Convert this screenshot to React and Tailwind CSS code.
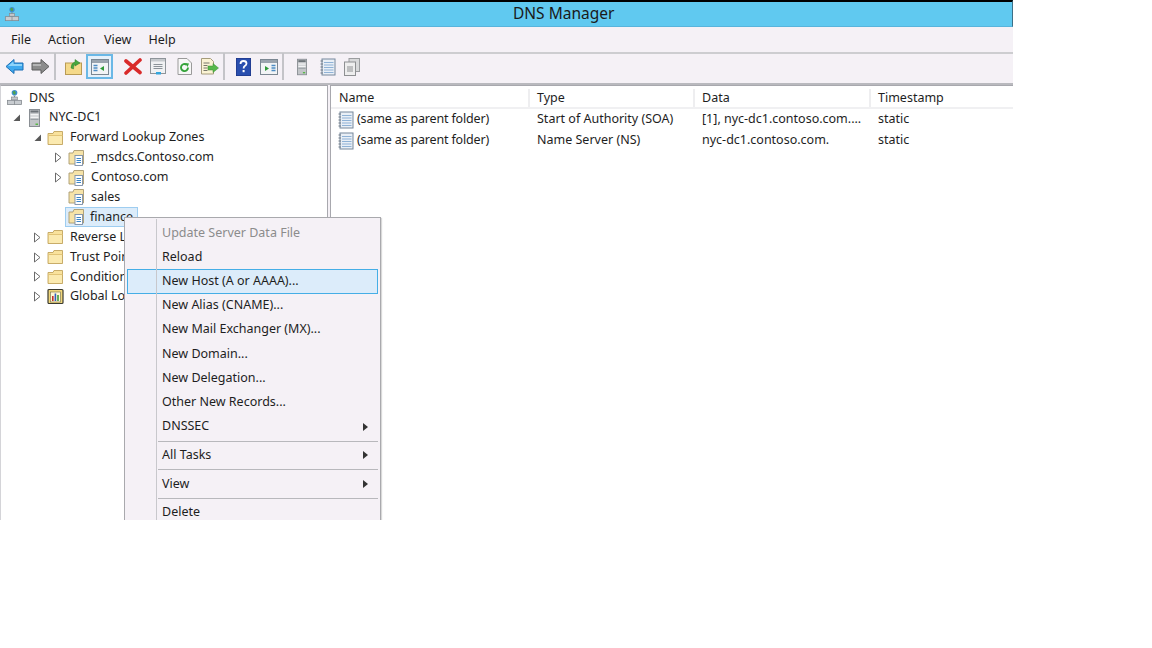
import React from "react";

const FONT = "font-['Noto_Sans','Open_Sans',sans-serif]";

// ---- Tree / list icons ----
const DnsIcon = ({ size = 18 }) => (
  <svg width={size} height={size} viewBox="0 0 18 18">
    <circle cx="9" cy="4" r="3" fill="#3f8fd0" />
    <path d="M7 3 Q9 1 10 3 Q11 5 9 6 Q7 5 7 3Z" fill="#4fa34a" />
    <rect x="8.4" y="7" width="1.2" height="3" fill="#808890" />
    <rect x="6" y="8.5" width="6" height="3" fill="#c4c8cc" stroke="#80868c" strokeWidth="0.7" />
    <rect x="1.5" y="12" width="15" height="4.5" fill="#c8ccd0" stroke="#80868c" strokeWidth="0.8" />
    <path d="M9 12v4.5" stroke="#80868c" strokeWidth="0.8" />
  </svg>
);

const ServerIcon = ({ width = 11, height = 18 }) => (
  <svg width={width} height={height} viewBox="0 0 11 18">
    <rect x="0.5" y="0.5" width="10" height="17" fill="#c2c5c8" stroke="#8a8f94" />
    <rect x="1.5" y="1.5" width="8" height="2" fill="#6d7378" />
    <rect x="1.5" y="5" width="8" height="1.5" fill="#f2f3f4" />
    <rect x="1.5" y="7.5" width="8" height="1.5" fill="#f2f3f4" />
    <rect x="1.5" y="10" width="8" height="1" fill="#9aa0a5" />
    <rect x="6.5" y="14.5" width="2.5" height="1.5" fill="#58b848" />
  </svg>
);

const Folder = () => (
  <svg width="17" height="16" viewBox="0 0 17 16">
    <path d="M1 3.5h5l1 -2h8.5v13H1z" fill="#f9e29c" stroke="#c2a45e" strokeWidth="0.9" />
    <path d="M1.5 5.5h14" stroke="#e2c477" strokeWidth="1" />
    <rect x="2" y="6" width="13" height="8" fill="#fbeab0" />
  </svg>
);

const ZoneFolder = () => (
  <svg width="17" height="18" viewBox="0 0 17 18">
    <path d="M1 4h4l1 -2.5h9.5V15H1z" fill="#f6e3a8" stroke="#a99a70" strokeWidth="0.9" />
    <rect x="7" y="6.5" width="7.5" height="10" fill="#fff" stroke="#7c8ea6" strokeWidth="0.9" />
    <path d="M8.5 9.5h4.5M8.5 11.5h4.5M8.5 13.5h4.5" stroke="#3b86c9" strokeWidth="1" />
  </svg>
);

const GlobalFolder = () => (
  <svg width="17" height="17" viewBox="0 0 17 17">
    <rect x="1" y="1.5" width="15" height="14" rx="1" fill="#f1d77c" stroke="#3b3b30" strokeWidth="1.2" />
    <rect x="3.5" y="4" width="10" height="10" fill="#fff7d2" stroke="#6f6a48" strokeWidth="0.6" />
    <rect x="5" y="8" width="1.6" height="5" fill="#c23030" />
    <rect x="7.6" y="5.5" width="1.6" height="7.5" fill="#2f5fc0" />
    <rect x="10.2" y="7" width="1.6" height="6" fill="#3e9a3e" />
  </svg>
);

const RecordIcon = () => (
  <svg width="16" height="18" viewBox="0 0 16 18">
    <rect x="2" y="1" width="13" height="16" fill="#e9eff6" stroke="#76889c" />
    <path d="M4 4.5h9.5M4 7h9.5M4 9.5h9.5M4 12h9.5M4 14.5h9.5" stroke="#8fb2d6" strokeWidth="1.2" />
    <path d="M0.5 3h2.5M0.5 6h2.5M0.5 9h2.5M0.5 12h2.5M0.5 15h2.5" stroke="#6c7884" strokeWidth="1" />
  </svg>
);

const Closed = () => (
  <svg width="9" height="11" viewBox="0 0 9 11">
    <path d="M1.5 1 L7 5.5 L1.5 10Z" fill="#fff" stroke="#6b6b6b" strokeWidth="1" />
  </svg>
);

const Open = () => (
  <svg width="9" height="9" viewBox="0 0 9 9">
    <path d="M8 1.5 V8 H1.5Z" fill="#595959" />
  </svg>
);

// ---- Toolbar icons ----
const BackIcon = () => (
  <svg width="19" height="17" viewBox="0 0 19 17">
    <path d="M1 8.5 L9 1.5 V5 H18 V12 H9 V15.5Z" fill="#3fa9ee" stroke="#1d6fb5" strokeWidth="1" />
    <path d="M3 8 L8.5 3.5 V6 H17 V8Z" fill="#8fd4fa" />
  </svg>
);

const ForwardIcon = () => (
  <svg width="19" height="17" viewBox="0 0 19 17">
    <path d="M18 8.5 L10 1.5 V5 H1 V12 H10 V15.5Z" fill="#8c8c8c" stroke="#5c5c5c" strokeWidth="1" />
    <path d="M1.8 6H10V8H1.8Z" fill="#b5b5b5" />
  </svg>
);

const UpIcon = () => (
  <svg width="17" height="17" viewBox="0 0 17 17">
    <rect x="0.5" y="5" width="16" height="11.5" fill="#f5d98a" stroke="#b99b55" />
    <path d="M6 10 Q6 5 10 4 V1.5 L15 5 L10 8 V6 Q8.5 7 8.5 11Z" fill="#47a83f" stroke="#2f7d2a" strokeWidth="0.5" />
  </svg>
);

const PaneIcon = ({ right }) => (
  <svg width="18" height="16" viewBox="0 0 18 16">
    <rect x="0.5" y="0.5" width="17" height="15" fill="#f2f4f6" stroke="#7b8792" />
    <rect x="1" y="1" width="16" height="3" fill="#9aa4ae" />
    {right ? (
      <>
        <path d="M5 7 L9 9.5 L5 12Z" fill="#2f9a3a" />
        <path d="M11.5 6.5h4M11.5 9h4M11.5 11.5h4" stroke="#4d8cc4" strokeWidth="1.3" />
      </>
    ) : (
      <>
        <path d="M2.5 6.5h4M2.5 9h4M2.5 11.5h4" stroke="#4d8cc4" strokeWidth="1.3" />
        <path d="M13 7 L9 9.5 L13 12Z" fill="#2f9a3a" />
      </>
    )}
  </svg>
);

const DeleteIcon = () => (
  <svg width="18" height="17" viewBox="0 0 18 17">
    <path d="M2 3 L16 14.5 M16 2 L2 15" stroke="#d92a2a" strokeWidth="3.6" strokeLinecap="round" />
  </svg>
);

const PropsIcon = () => (
  <svg width="16" height="17" viewBox="0 0 16 17">
    <rect x="0.5" y="0.5" width="15" height="15" fill="#f0f1f3" stroke="#8e949a" />
    <rect x="1" y="1" width="14" height="2.5" fill="#c5c9cd" />
    <path d="M3.5 6.5h9M3.5 8.5h9M3.5 10.5h9" stroke="#8b9299" strokeWidth="1" />
    <rect x="6" y="14" width="5" height="2.5" fill="#35a6dd" />
  </svg>
);

const RefreshIcon = () => (
  <svg width="15" height="17" viewBox="0 0 15 17">
    <path d="M1 0.5h9l4.5 4.5v11.5H1z" fill="#f7f7f7" stroke="#9a9a9a" />
    <path d="M11 9.5a3.5 3.5 0 1 1 -1.5 -2.8" fill="none" stroke="#35a33a" strokeWidth="1.9" />
    <path d="M8 5 L12 5.5 L10.5 9Z" fill="#35a33a" />
  </svg>
);

const ExportIcon = () => (
  <svg width="18" height="17" viewBox="0 0 18 17">
    <path d="M0.5 0.5h9l3 3V16H0.5z" fill="#fbf3d4" stroke="#a59c7c" />
    <path d="M2.5 5h6M2.5 7.5h4M2.5 10h4M2.5 12.5h4" stroke="#77766a" strokeWidth="1" />
    <path d="M7 8h5V5.5L17.5 10 12 14.5V12H7z" fill="#57b84a" stroke="#3b8f33" strokeWidth="0.5" />
  </svg>
);

const HelpIcon = () => (
  <svg width="15" height="18" viewBox="0 0 15 18">
    <rect x="0" y="0" width="15" height="18" fill="#2a4fae" />
    <rect x="0" y="0" width="15" height="18" fill="none" stroke="#1a2f7a" />
    <path d="M4.5 6 Q4.5 3 7.5 3 Q10.5 3 10.5 5.5 Q10.5 7 8.8 8 Q7.6 8.8 7.6 10.5" fill="none" stroke="#fff" strokeWidth="1.8" />
    <rect x="6.6" y="12" width="2" height="2.2" fill="#fff" />
  </svg>
);

const CopyIcon = () => (
  <svg width="16" height="18" viewBox="0 0 16 18">
    <rect x="5" y="0.5" width="10.5" height="13" fill="#d8d9da" stroke="#9b9d9f" />
    <rect x="0.5" y="4" width="11" height="13.5" fill="#eeeeee" stroke="#8e9092" />
    <path d="M3 9h6M3 11h6M3 13h6" stroke="#8e9092" strokeWidth="1" />
  </svg>
);

const Sep = ({ className = "" }) => <div className={`w-[2px] h-[27px] bg-[#c4c4c8] ${className}`} />;

const TreeRow = ({ indent = "", twisty, icon, label, selected }) => (
  <div className={`flex items-center h-[19.9px] text-[12.5px] text-[#1e1e1e] whitespace-nowrap ${indent}`}>
    <div className={`flex justify-start items-center shrink-0 ${twisty === "none" ? "w-[3px]" : "w-[12px]"}`}>
      {twisty === "open" && <Open />}
      {twisty === "closed" && <Closed />}
    </div>
    <div className={`flex items-center h-[20px] ${selected ? "bg-[#dcecfa] border border-[#9ecdf0] -ml-[1px]" : ""}`}>
      <div className="w-[21px] flex justify-center shrink-0">{icon}</div>
      <span className={selected ? "pl-[3px] pr-[4px]" : "pl-[4px]"}>{label}</span>
    </div>
  </div>
);

const MenuItem = ({ label, disabled, active, submenu }) => (
  <div
    className={`flex items-center justify-between h-[24.2px] pl-[35px] pr-[10px] ml-[2px] mr-[2px] text-[12.5px] whitespace-nowrap ${
      disabled ? "text-[#8c8c8c]" : "text-[#1e1e1e]"
    } ${active ? "bg-[#dcecfa] border border-[#45aee6]" : ""}`}
  >
    <span className={active ? "-ml-[1px]" : ""}>{label}</span>
    {submenu && (
      <svg width="5" height="8" viewBox="0 0 5 8">
        <path d="M0 0 L5 4 L0 8Z" fill="#333" />
      </svg>
    )}
  </div>
);

const MenuSep = () => <div className="ml-[33px] mr-[2px] h-[1px] mt-[2px] mb-[1.5px] bg-[#b8b8bc]" />;

const records = [
  { name: "(same as parent folder)", type: "Start of Authority (SOA)", data: "[1], nyc-dc1.contoso.com....", time: "static" },
  { name: "(same as parent folder)", type: "Name Server (NS)", data: "nyc-dc1.contoso.com.", time: "static" },
];

export default function App() {
  return (
    <div className={`w-[1152px] h-[648px] bg-white overflow-hidden ${FONT}`}>
      <div className="relative w-[1013px] h-[520px] overflow-hidden bg-[#f5f1f6] flex flex-col">
        {/* Title bar */}
        <div className="h-[27px] shrink-0 bg-[#60c9f0] border-t-2 border-black border-b border-b-[#58b4dc] border-r border-r-[#3d6f85] flex items-center">
          <div className="pl-[4px]">
            <DnsIcon size={16} />
          </div>
          <div className="ml-[493px] text-[15.5px] text-[#1a1a1a] leading-none">DNS Manager</div>
        </div>

        {/* Menu bar */}
        <div className="h-[27px] shrink-0 flex items-center text-[12.5px] text-[#1e1e1e] pl-[11px] pt-[1px] border-b-2 border-[#cdcdd0]">
          <span>File</span>
          <span className="ml-[17px]">Action</span>
          <span className="ml-[19px]">View</span>
          <span className="ml-[17px]">Help</span>
        </div>

        {/* Toolbar */}
        <div className="h-[31px] shrink-0 flex items-center pl-[5px] pb-[4px] border-b-2 border-[#b9b9be]">
          <BackIcon />
          <div className="ml-[7px]"><ForwardIcon /></div>
          <Sep className="ml-[4px]" />
          <div className="ml-[9px]"><UpIcon /></div>
          <div className="ml-[4px] w-[27px] h-[25px] flex items-center justify-center bg-[#e6f1fa] border-2 border-[#6bb8e6]">
            <PaneIcon />
          </div>
          <div className="ml-[11px]"><DeleteIcon /></div>
          <div className="ml-[8px]"><PropsIcon /></div>
          <div className="ml-[11px]"><RefreshIcon /></div>
          <div className="ml-[9px]"><ExportIcon /></div>
          <Sep className="ml-[4px]" />
          <div className="ml-[11px]"><HelpIcon /></div>
          <div className="ml-[9px]"><PaneIcon right /></div>
          <Sep className="ml-[4px]" />
          <div className="ml-[13px]"><ServerIcon width={10} height={18} /></div>
          <div className="ml-[13px]"><RecordIcon /></div>
          <div className="ml-[8px]"><CopyIcon /></div>
        </div>

        {/* Panes */}
        <div className="flex-1 flex min-h-0">
          <div className="w-[328px] shrink-0 bg-white border-t border-r border-l border-[#a8a8ae] border-l-[#d4d4d8] pt-[2px]">
            <TreeRow twisty="none" icon={<DnsIcon size={17} />} label="DNS" />
            <TreeRow indent="pl-[11px]" twisty="open" icon={<ServerIcon />} label="NYC-DC1" />
            <TreeRow indent="pl-[32px]" twisty="open" icon={<Folder />} label="Forward Lookup Zones" />
            <TreeRow indent="pl-[53px]" twisty="closed" icon={<ZoneFolder />} label="_msdcs.Contoso.com" />
            <TreeRow indent="pl-[53px]" twisty="closed" icon={<ZoneFolder />} label="Contoso.com" />
            <TreeRow indent="pl-[53px]" icon={<ZoneFolder />} label="sales" />
            <TreeRow indent="pl-[53px]" icon={<ZoneFolder />} label="finance" selected />
            <TreeRow indent="pl-[32px]" twisty="closed" icon={<Folder />} label="Reverse Lookup Zones" />
            <TreeRow indent="pl-[32px]" twisty="closed" icon={<Folder />} label="Trust Points" />
            <TreeRow indent="pl-[32px]" twisty="closed" icon={<Folder />} label="Conditional Forwarders" />
            <TreeRow indent="pl-[32px]" twisty="closed" icon={<GlobalFolder />} label="Global Logs" />
          </div>

          <div className="flex-1 ml-[2px] bg-white border-l border-t border-[#a8a8ae] pt-[3px] text-[12.5px] text-[#1e1e1e] whitespace-nowrap">
            <div className="flex h-[20px] items-center border-b-2 border-[#f0f0f2]">
              <div className="w-[199px] pl-[8px] border-r-2 border-[#eeeef0] h-full flex items-center">Name</div>
              <div className="w-[165px] pl-[7px] border-r-2 border-[#eeeef0] h-full flex items-center">Type</div>
              <div className="w-[176px] pl-[7px] border-r-2 border-[#eeeef0] h-full flex items-center">Data</div>
              <div className="pl-[7px]">Timestamp</div>
            </div>
            {records.map((r, i) => (
              <div key={i} className="flex items-center h-[21px]">
                <div className="w-[199px] pl-[7px] flex items-center gap-[3px]">
                  <RecordIcon />
                  <span className="tracking-[-0.17px]">{r.name}</span>
                </div>
                <div className="w-[165px] pl-[7px]">{r.type}</div>
                <div className="w-[176px] pl-[7px]">{r.data}</div>
                <div className="pl-[7px]">{r.time}</div>
              </div>
            ))}
          </div>
        </div>

        {/* Context menu */}
        <div className="absolute left-[124px] top-[217px] w-[257px] h-[320px] bg-[#f5f1f6] border border-[#a9a9ad] shadow-[1px_1px_1px_rgba(0,0,0,0.15)] pt-[3px]">
          <div className="absolute left-[31px] top-[1px] bottom-0 w-[1px] bg-[#c8c8cc]" />
          <MenuItem label="Update Server Data File" disabled />
          <MenuItem label="Reload" />
          <MenuItem label="New Host (A or AAAA)..." active />
          <MenuItem label="New Alias (CNAME)..." />
          <MenuItem label="New Mail Exchanger (MX)..." />
          <MenuItem label="New Domain..." />
          <MenuItem label="New Delegation..." />
          <MenuItem label="Other New Records..." />
          <MenuItem label="DNSSEC" submenu />
          <MenuSep />
          <MenuItem label="All Tasks" submenu />
          <MenuSep />
          <MenuItem label="View" submenu />
          <MenuSep />
          <MenuItem label="Delete" />
        </div>
      </div>
    </div>
  );
}
